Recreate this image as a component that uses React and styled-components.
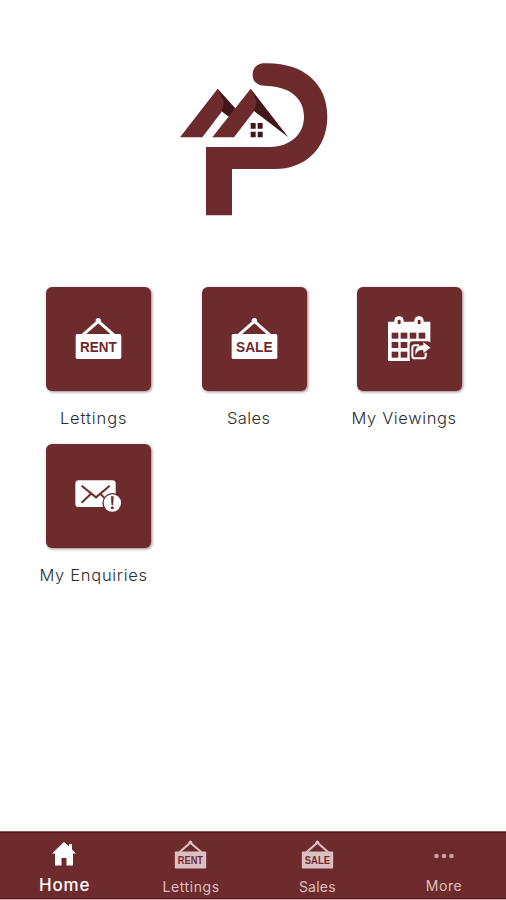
import React from 'react';
import styled, { createGlobalStyle } from 'styled-components';

const maroon = '#6e2b2d';

const GlobalStyle = createGlobalStyle`
  * { box-sizing: border-box; }
  body { margin: 0; background: #fff; font-family: Inter, "Open Sans", sans-serif; }
`;

const Screen = styled.div`
  width: 506px;
  height: 900px;
  display: flex;
  flex-direction: column;
  background: #fff;
  overflow: hidden;
`;

const Header = styled.header`
  height: 287px;
  padding: 55px 0 0 170px;
`;

const Logo = styled.svg`
  display: block;
  width: 170px;
  height: 170px;
`;

const Grid = styled.main`
  flex: 1;
  display: grid;
  grid-template-columns: repeat(3, 155.3px);
  grid-auto-rows: 157px;
  padding-left: 15.6px;
`;

const Cell = styled.div`
  display: flex;
  flex-direction: column;
  align-items: center;
`;

const Tile = styled.div`
  width: 105px;
  height: 104px;
  flex: none;
  margin-left: 11px;
  border-radius: 6px;
  background: ${maroon};
  box-shadow: 1px 1px 3px rgba(60, 30, 30, 0.55);
  display: flex;
  justify-content: center;
  padding-top: 29px;
`;

const TileLabel = styled.span`
  margin-top: 17px;
  font-size: 16.5px;
  line-height: 20px;
  font-weight: 300;
  letter-spacing: ${(p) => p.$spacing}px;
  margin-right: ${(p) => -p.$spacing}px;
  color: #2c2c2c;
  white-space: nowrap;
`;

const Icon = styled.svg`
  display: block;
  flex: none;
  width: ${(p) => p.$w}px;
  height: ${(p) => p.$h}px;
`;

const SignText = styled.text`
  font-family: "Liberation Sans", Arial, sans-serif;
  font-weight: 700;
  font-size: 46px;
  fill: ${maroon};
`;

const Nav = styled.nav`
  height: 69px;
  flex: none;
  display: grid;
  grid-template-columns: repeat(4, 126.5px);
  padding-left: 1px;
  background: ${maroon};
  border-top: 1px solid #8b5a5c;
  border-bottom: 1px solid #c9a9aa;
  box-shadow: inset 0 1px 0 #5d1519, inset 0 -1px 0 #5d1519;
`;

const NavItem = styled.div`
  display: flex;
  flex-direction: column;
  align-items: center;
  color: ${(p) => (p.$active ? '#fff' : '#dcc0c1')};
`;

const NavIcon = styled.div`
  height: 42px;
  display: flex;
  align-items: flex-start;
  padding-top: ${(p) => p.$top}px;
`;

const NavLabel = styled.span`
  margin-top: ${(p) => p.$shift}px;
  font-size: ${(p) => (p.$active ? 17 : 14)}px;
  line-height: 20px;
  font-weight: ${(p) => (p.$active ? 500 : 400)};
  letter-spacing: ${(p) => p.$spacing}px;
  margin-right: ${(p) => -p.$spacing}px;
`;

const SignIcon = ({ text, w, h, color = '#fff' }) => (
  <Icon $w={w} $h={h} viewBox="110 120 153 135">
    <path d="M138 178 L186 136 L234 178" fill="none" stroke={color} strokeWidth="9" />
    <circle cx="186" cy="134" r="8" fill={color} />
    <rect x="118" y="174" width="137" height="75" rx="5" fill={color} />
    <SignText x="131" y="228" textLength="110" lengthAdjust="spacingAndGlyphs">{text}</SignText>
  </Icon>
);

const CalendarIcon = () => (
  <Icon $w={50} $h={50} viewBox="119 120 150 150">
    <path d="M131 137 H258 V201 H203 V255 H131 Z" fill="#fff" />
    <rect x="150" y="121" width="28" height="30" rx="13" fill="#fff" />
    <rect x="210" y="121" width="28" height="30" rx="13" fill="#fff" />
    <g fill={maroon}>
      <rect x="160" y="131" width="9" height="14" rx="4" />
      <rect x="220" y="131" width="9" height="14" rx="4" />
      {[142, 169, 196, 223].map((x) => <rect key={x} x={x} y="170" width="20" height="18" />)}
      {[142, 169].map((x) => <rect key={x} x={x} y="198" width="20" height="18" />)}
      {[142, 169].map((x) => <rect key={x} x={x} y="227" width="20" height="18" />)}
      <rect x="196" y="196" width="63" height="62" rx="9" />
    </g>
    <path d="M224 208 H212 Q204 208 204 216 V239 Q204 247 212 247 H236 Q244 247 244 239 V230" fill="none" stroke="#fff" strokeWidth="6" />
    <path d="M214 237 C210 217 220 208 237 208 V199 L258 215 L237 231 V222 C224 221 217 226 214 237Z" fill="#fff" />
  </Icon>
);

const MailIcon = () => (
  <Icon $w={50} $h={50} viewBox="130 111 150 150">
    <rect x="134" y="133" width="121" height="80" rx="10" fill="#fff" />
    <path d="M153 149 L196 184 L237 149 M153 200 L181 173 M209 173 L220 185" fill="none" stroke={maroon} strokeWidth="6" />
    <circle cx="245" cy="201" r="30" fill={maroon} />
    <circle cx="245" cy="201" r="26" fill="#fff" />
    <path d="M241 181 H249 L247.500 207 H242.500Z" fill={maroon} />
    <circle cx="245" cy="215" r="4.500" fill={maroon} />
  </Icon>
);

const tiles = [
  { label: 'Lettings', icon: <SignIcon text="RENT" w={51} h={45} />, spacing: 0.9 },
  { label: 'Sales', icon: <SignIcon text="SALE" w={51} h={45} />, spacing: 0.4 },
  { label: 'My Viewings', icon: <CalendarIcon />, spacing: 0.6 },
  { label: 'My Enquiries', icon: <MailIcon />, spacing: 0.7 },
];

export default function App() {
  return (
    <>
      <GlobalStyle />
      <Screen>
        <Header>
          <Logo viewBox="0 0 510 510">
            <path fill={maroon} d="M108 276 H300 C365 274 402 235 402 185 C402 130 360 93 283 92 C260 92 248 78 248 59 C248 38 262 25 285 25 C400 22 472 85 472 185 C472 280 405 342 315 342 H186 V481 H108Z" />
            <path fill="#43161a" d="M143 101 L196 160 L181 188 L153 168Z M242 101 L355 247 L252 168Z" />
            <path fill={maroon} d="M30 247 L143 101 L162 141 L154 172 L97 247Z M127 247 L242 101 L260 140 L252 169 L192 247Z" />
            <path fill="#43161a" d="M242 204 h15 v17 h-15z M263 204 h15 v17 h-15z M242 230 h15 v17 h-15z M263 230 h15 v17 h-15z" />
          </Logo>
        </Header>
        <Grid>
          {tiles.map((t) => (
            <Cell key={t.label}>
              <Tile>{t.icon}</Tile>
              <TileLabel $spacing={t.spacing}>{t.label}</TileLabel>
            </Cell>
          ))}
        </Grid>
        <Nav>
          <NavItem $active>
            <NavIcon $top={10}>
              <Icon $w={24} $h={24} viewBox="0 0 24 24">
                <path d="M12 0 L17 4.500 V2 H20 V7.500 L24 11.500 H21 V23.500 H14.500 V16 H9.500 V23.500 H3 V11.500 H0Z" fill="#fff" />
              </Icon>
            </NavIcon>
            <NavLabel $active $shift={1} $spacing={0.9}>Home</NavLabel>
          </NavItem>
          <NavItem>
            <NavIcon $top={7}><SignIcon text="RENT" w={35} h={31} color="#dcc0c1" /></NavIcon>
            <NavLabel $shift={3} $spacing={0.6}>Lettings</NavLabel>
          </NavItem>
          <NavItem>
            <NavIcon $top={7}><SignIcon text="SALE" w={35} h={31} color="#dcc0c1" /></NavIcon>
            <NavLabel $shift={3} $spacing={0.2}>Sales</NavLabel>
          </NavItem>
          <NavItem>
            <NavIcon $top={21}>
              <Icon $w={20} $h={6} viewBox="0 0 20 6" fill="#c4a0a1">
                <circle cx="2.500" cy="3" r="2.300" />
                <circle cx="10" cy="3" r="2.300" />
                <circle cx="17.500" cy="3" r="2.300" />
              </Icon>
            </NavIcon>
            <NavLabel $shift={2} $spacing={0.6}>More</NavLabel>
          </NavItem>
        </Nav>
      </Screen>
    </>
  );
}
